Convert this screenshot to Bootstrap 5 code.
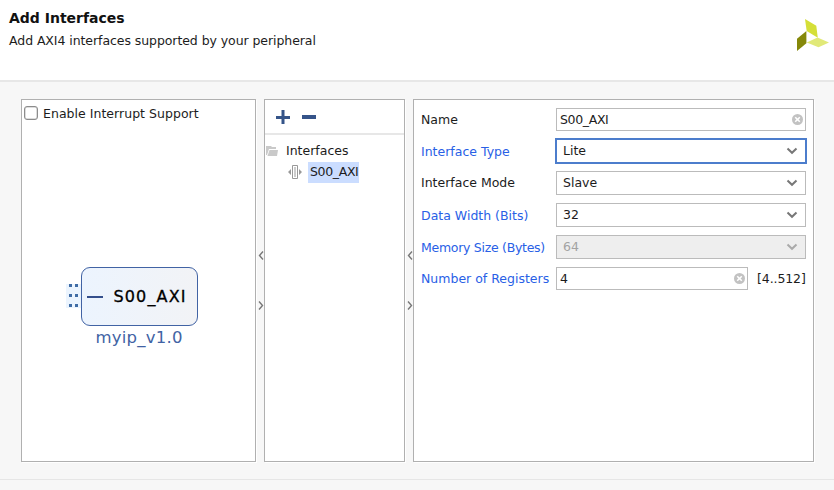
<!DOCTYPE html>
<html lang="en">
<head>
<meta charset="utf-8">
<title>Add Interfaces</title>
<link href="https://cdn.jsdelivr.net/npm/bootstrap@5.3.0/dist/css/bootstrap.min.css" rel="stylesheet">
<style>
body{font-family:"DejaVu Sans",sans-serif;font-size:12.5px;line-height:16px;color:#1c1c1c;background:#f7f7f7;height:490px;overflow:hidden}
svg{display:block;flex:none}
.page-head{height:82px;border-bottom:2px solid #e7e7e7;padding:10px 4px 0 9px}
.page-head h1{font-size:14px;line-height:16px;font-weight:700;margin:0 0 7px;color:#111}
.intro{letter-spacing:-.07px}
.logo-mark{margin-top:9px}
.work{padding:17px 20px 0 21px}
.pane{height:363px;background:#fff;border:1px solid #b0b0b0;box-shadow:1px 1px 0 #fff}
.pane-diagram{width:235px}
.pane-tree{width:141px}
.pane-form{width:401px;padding:8px 7px}
.splitter{width:8px;padding:152px 0 0 2px}
.form-check-input.irq{width:14px;height:14px;margin:-1px 0 0;border:1px solid #8c8c8c;border-radius:3px;box-shadow:inset 0 0 0 .5px #bbb}
.irq-line{height:27px;padding-left:2px;gap:5px}
.irq-line label{letter-spacing:.03px}
.tools{height:35px;border-bottom:2px solid #e7e7e7;padding:10px 0 0 11px;gap:12px}
.node-root{height:22px;margin-top:5px;padding-left:1px;gap:8px}
.node-leaf{height:21px;padding-left:23px;gap:6px}
.node-leaf svg{margin-top:-1px}
.axi-name{letter-spacing:-.35px}
.picked{background:#cbddff;height:21px;width:51px;padding:2px 0 0 2px}
.prop{height:24px;margin-bottom:8px}
.prop.tight{height:23px}
.prop label{width:135px;white-space:nowrap}
.prop label.changed{color:#2860e6}
.prop:not(.tight) label.changed{padding-top:2px}
.prop label.narrowed{letter-spacing:-.28px}
.field{width:250px;height:100%;border:1px solid #bbb;border-radius:0;background:#fff;padding:0 2px 0 3px}
.pick{padding:0 7px 0 6px}
.pick.current{width:252px;height:26px;margin:0 -1px;border:2px solid #4c7dcc}
.pick.off{background:#eee;color:#a3a3a3}
.field.short{width:192px}
.limits{margin-left:9px;letter-spacing:-.1px}
.foot-rule{margin-top:17px;border-top:1px solid #e6e6e6}
</style>
</head>
<body>
<header class="page-head bg-white d-flex justify-content-between">
  <div><h1>Add Interfaces</h1><div class="intro">Add AXI4 interfaces supported by your peripheral</div></div>
  <svg class="logo-mark" width="33" height="33" viewBox="0 0 33 33"><path fill="#d5df38" d="M8 0l11.300 6.700 1.500 12L9.700 12z"/><path fill="#858809" d="M0 19.700l9.400-7.700v12.300L0 32z"/><path fill="#e1e978" d="M9.700 23.500l10.800-5 11.500 5-10.500 4.800z"/></svg>
</header>
<main class="work d-flex">
  <section class="pane pane-diagram">
    <div class="irq-line d-flex align-items-center"><input class="form-check-input irq" type="checkbox" id="irq"><label for="irq">Enable Interrupt Support</label></div>
    <svg width="233" height="230" viewBox="22 127 233 230" font-family="DejaVu Sans, sans-serif">
      <defs><linearGradient id="shade"><stop offset="0" stop-color="#ecf4fe"/><stop offset="1" stop-color="#f2f3f6"/></linearGradient></defs>
      <path fill="#ebf4fe" d="M66 284h15v24H66z"/>
      <path fill="#3f6ca5" d="M69 284h3v3h-3zM75 284h3v3h-3zM69 294h3v3h-3zM75 294h3v3h-3zM69 304h3v3h-3zM75 304h3v3h-3z"/>
      <rect x="81.500" y="267.500" width="116" height="58" rx="8.500" fill="url(#shade)" stroke="#4163a4"/>
      <path fill="#344f8c" d="M87 296h16v2H87z"/>
      <text x="113.500" y="302" font-size="16" fill="#000" stroke="#000" stroke-width=".3" textLength="72" lengthAdjust="spacing">S00_AXI</text>
      <text x="95.500" y="343" font-size="16.500" fill="#4163a4" textLength="87" lengthAdjust="spacing">myip_v1.0</text>
    </svg>
  </section>
  <div class="splitter"><svg width="6" height="60" viewBox="0 0 6 60" fill="none" stroke="#777" stroke-width="1.400"><path d="M5 .5L1.500 4.500 5 8.500M1 50.500l3.500 4-3.500 4"/></svg></div>
  <section class="pane pane-tree">
    <div class="tools d-flex"><svg width="14" height="14" viewBox="0 0 14 14"><path fill="#355489" d="M0 6h14v3H0zM5.500 0h3v14h-3z"/></svg><svg width="14" height="14" viewBox="0 0 14 14"><path fill="#355489" d="M0 5h14v4H0z"/></svg></div>
    <div class="node-root d-flex align-items-center"><svg width="12" height="10" viewBox="0 0 12 10"><path fill="#c9c9c9" d="M0 0h5l1 1h4v2H3L1 9H0z"/><path fill="#c9c9c9" d="M3.500 4H12l-1 6H1.500z"/></svg><span class="root-text">Interfaces</span></div>
    <div class="node-leaf d-flex align-items-center"><svg width="14" height="14" viewBox="0 0 14 14"><path fill="#999" d="M0 7l3-3v6zM14 7l-3-3v6z"/><path fill="#fff" stroke="#999" d="M4.500.5h5v13h-5z"/><path fill="#ccc" d="M6 2h2v10H6z"/></svg><span class="picked axi-name">S00_AXI</span></div>
  </section>
  <div class="splitter"><svg width="6" height="60" viewBox="0 0 6 60" fill="none" stroke="#777" stroke-width="1.400"><path d="M5 .5L1.500 4.500 5 8.500M1 50.500l3.500 4-3.500 4"/></svg></div>
  <section class="pane pane-form">
    <div class="prop tight d-flex align-items-center"><label>Name</label><div class="field d-flex align-items-center justify-content-between"><span class="axi-name">S00_AXI</span><svg width="11" height="11" viewBox="0 0 12 12"><circle cx="6" cy="6" r="6" fill="#c2c2c2"/><path stroke="#fff" stroke-width="1.700" d="M3.500 3.500l5 5m0-5l-5 5"/></svg></div></div>
    <div class="prop d-flex align-items-center"><label class="changed">Interface Type</label><div class="field pick current d-flex align-items-center justify-content-between"><span>Lite</span><svg width="12" height="8" viewBox="0 0 12 8"><path fill="none" stroke="#777" stroke-width="2" d="M1.500 1.500L6 5.800l4.500-4.300"/></svg></div></div>
    <div class="prop d-flex align-items-center"><label>Interface Mode</label><div class="field pick d-flex align-items-center justify-content-between"><span>Slave</span><svg width="12" height="8" viewBox="0 0 12 8"><path fill="none" stroke="#777" stroke-width="2" d="M1.500 1.500L6 5.800l4.500-4.300"/></svg></div></div>
    <div class="prop d-flex align-items-center"><label class="changed">Data Width (Bits)</label><div class="field pick d-flex align-items-center justify-content-between"><span>32</span><svg width="12" height="8" viewBox="0 0 12 8"><path fill="none" stroke="#777" stroke-width="2" d="M1.500 1.500L6 5.800l4.500-4.300"/></svg></div></div>
    <div class="prop d-flex align-items-center"><label class="changed narrowed">Memory Size (Bytes)</label><div class="field pick off d-flex align-items-center justify-content-between"><span>64</span><svg width="12" height="8" viewBox="0 0 12 8"><path fill="none" stroke="#aaa" stroke-width="2" d="M1.500 1.500L6 5.800l4.500-4.300"/></svg></div></div>
    <div class="prop tight d-flex align-items-center"><label class="changed">Number of Registers</label><div class="field short d-flex align-items-center justify-content-between"><span>4</span><svg width="11" height="11" viewBox="0 0 12 12"><circle cx="6" cy="6" r="6" fill="#c2c2c2"/><path stroke="#fff" stroke-width="1.700" d="M3.500 3.500l5 5m0-5l-5 5"/></svg></div><span class="limits">[4..512]</span></div>
  </section>
</main>
<div class="foot-rule"></div>
<script src="https://cdn.jsdelivr.net/npm/bootstrap@5.3.0/dist/js/bootstrap.bundle.min.js"></script>
</body>
</html>
